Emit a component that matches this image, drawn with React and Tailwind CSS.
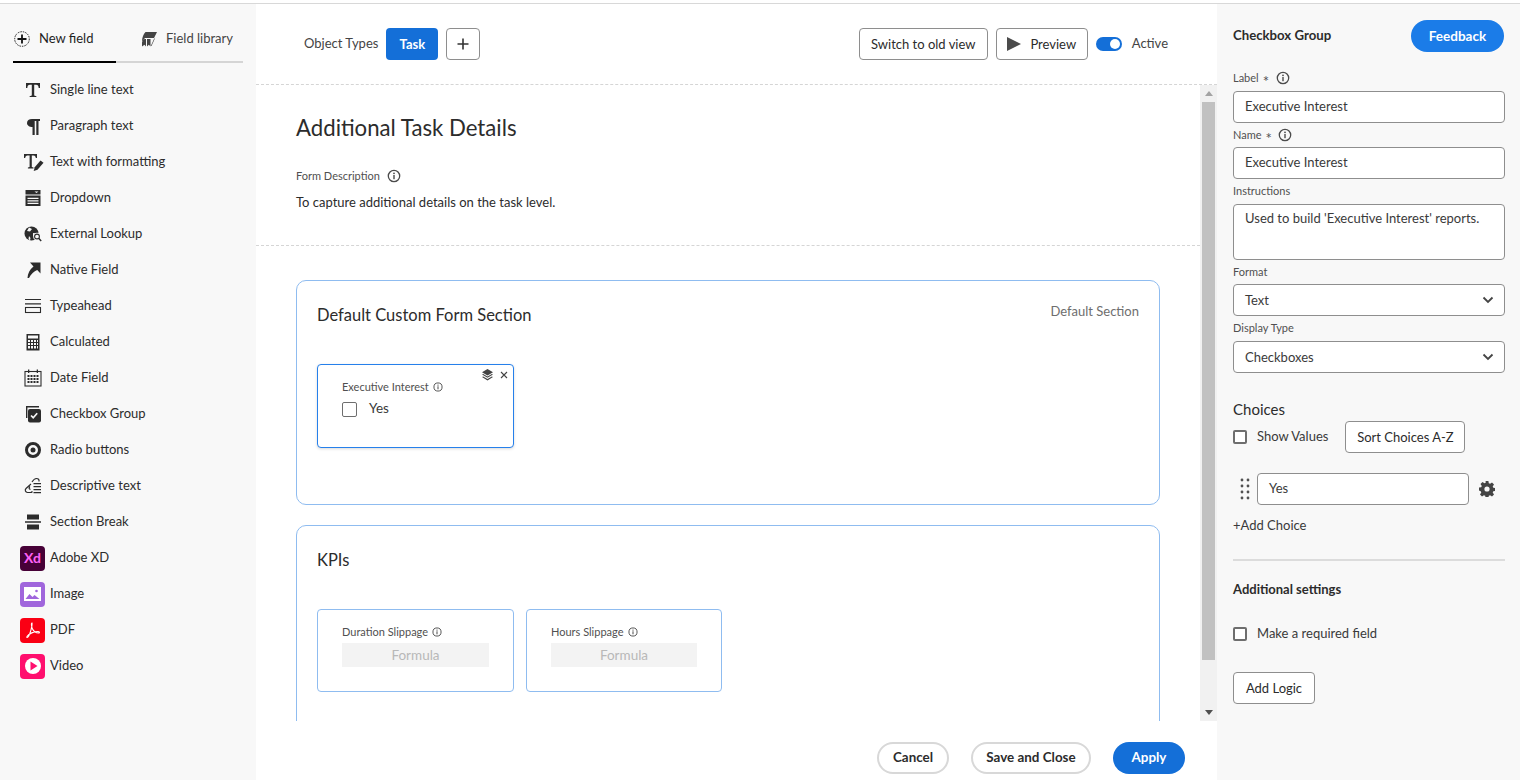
import React from "react";

const F = { fontFamily: '"Lato", "Noto Sans", sans-serif' };

const InfoIcon = ({ s = 14, c = "#4b4b4b" }) => (
  <svg width={s} height={s} viewBox="0 0 14 14" fill="none">
    <circle cx="7" cy="7" r="5.7" stroke={c} strokeWidth="1.3" />
    <circle cx="7" cy="4.300" r="0.9" fill={c} />
    <rect x="6.300" y="6" width="1.400" height="4.200" fill={c} />
  </svg>
);

const Ico = ({ children }) => (
  <svg width="18" height="18" viewBox="0 0 18 18" fill="#2c2c2c">{children}</svg>
);

const icons = {
  t: (
    <Ico>
      <path d="M2 2h14v5h-1.300c-.2-2-.8-3.200-2.700-3.200h-1.800V14.600l2.200.6V16H5.600v-.8l2.200-.6V3.800H6C4.100 3.800 3.500 5 3.300 7H2z" />
    </Ico>
  ),
  para: (
    <Ico>
      <path d="M8 2h8v2h-1.500v14h-2.200V4H10.700v14H8.500v-8C5.500 10 3 8.500 3 6s2-4 5-4z" />
    </Ico>
  ),
  fmt: (
    <svg width="20" height="18" viewBox="0 0 20 18" fill="#2c2c2c">
      <path d="M0 1h13v4h-1.200c-.2-1.600-.7-2.500-2.300-2.500H7.800V14l1.700.5v1H3.900v-1l1.700-.5V2.500H3.500C1.900 2.500 1.400 3.400 1.200 5H0z" />
      <path d="M16.500 7.500l3 2.200-6 7-3.800 1.200 1-3.700z" />
    </svg>
  ),
  dd: (
    <Ico>
      <path d="M1.500 1h15v4.500h-15zM1.500 6.500h15V17h-15z" />
      <path d="M10.500 2.500h4l-2 1.600z" fill="#f8f8f8" />
      <path d="M3.500 8.700h11v1.300h-11zM3.500 11.200h11v1.300h-11zM3.500 13.700h11V15h-11z" fill="#f8f8f8" />
    </Ico>
  ),
  globe: (
    <svg width="18" height="18" viewBox="0 0 18 18" fill="#2c2c2c">
      <circle cx="7.500" cy="8.500" r="7" />
      <path d="M5 2.500l3 1.500-2 2.500-3-.5zM9 8l3.500.5-2 3-1.500-.5zM5 11l1.500 2-.5 2.500-1.500-1.500z" fill="#f8f8f8" />
      <circle cx="13" cy="11.500" r="3.800" fill="#f8f8f8" />
      <circle cx="13" cy="11.500" r="2.400" fill="#f8f8f8" stroke="#2c2c2c" strokeWidth="1.100" />
      <path d="M14.700 13.200l2.500 2.800" stroke="#2c2c2c" strokeWidth="1.400" />
    </svg>
  ),
  arrow: (
    <Ico>
      <path d="M6 1.500h10.500v11L13.200 9C10 10.500 7 13 5 17H3.500c.3-4.500 2-8.500 6-11.500z" />
    </Ico>
  ),
  type: (
    <Ico>
      <path d="M1 2h16v1.100H1zM1 6.300h16v1.100H1z" />
      <rect x="1.500" y="10.500" width="15" height="5" fill="none" stroke="#2c2c2c" strokeWidth="1.100" />
    </Ico>
  ),
  calc: (
    <Ico>
      <path d="M2.500 1h13v16.500h-13z" />
      <path d="M4 2.500h10v3H4z" fill="#f8f8f8" />
      <path d="M4 7h2v2H4zM7 7h2v2H7zM10 7h2v2h-2zM13 7h1v2h-1zM4 10h2v2H4zM7 10h2v2H7zM10 10h2v2h-2zM13 10h1v2h-1zM4 13h2v2.500H4zM7 13h2v2.500H7zM10 13h2v2.500h-2zM13 13h1v2.500h-1z" fill="#f8f8f8" />
    </Ico>
  ),
  date: (
    <Ico>
      <rect x="1" y="2.500" width="16" height="14.500" fill="none" stroke="#2c2c2c" strokeWidth="1.100" />
      <path d="M4 .5h1.300v3.500H4zM12.700 .5H14v3.500h-1.300z" />
      <path d="M3.500 6h2v2h-2zM6.500 6h2v2h-2zM9.500 6h2v2h-2zM12.500 6h2v2h-2zM3.500 9h2v2h-2zM6.500 9h2v2h-2zM9.500 9h2v2h-2zM12.500 9h2v2h-2zM3.500 12h2v2h-2zM6.500 12h2v2h-2zM9.500 12h2v2h-2zM12.500 12h2v2h-2z" />
    </Ico>
  ),
  check: (
    <Ico>
      <path d="M2 1h13v1.400H3.400V13H2z" />
      <rect x="4" y="4" width="13" height="13.500" rx="2" />
      <path d="M7 10.500l2.200 2.200 4-4.400" fill="none" stroke="#f8f8f8" strokeWidth="1.700" />
    </Ico>
  ),
  radio: (
    <Ico>
      <circle cx="9" cy="9" r="6.500" fill="none" stroke="#2c2c2c" strokeWidth="3" />
      <circle cx="9" cy="9" r="2.500" />
    </Ico>
  ),
  desc: (
    <Ico>
      <path d="M7 7L2 11.500c-1.500 1.500-.5 4 1.500 4h3c1 0 1.500-.5 2-1M6 9.500c-1.500 1.200-1 2.800.5 2.800M8 5c1.200-2 2.700-3.500 4.500-3.500S15.300 2.500 15 4.500" fill="none" stroke="#2c2c2c" strokeWidth="1.200" />
      <path d="M9.500 6h7.500v1.200H9.500zM9.500 9H17v1.200H9.500zM9.500 12H17v1.200H9.500zM9.500 15H17v1.200H9.500z" />
    </Ico>
  ),
  sec: (
    <Ico>
      <path d="M3 1.500h12v5H3zM1 8.200h16v1.500H1zM3 11.500h12v5H3z" />
    </Ico>
  ),
};

const Badge = ({ bg, children }) => (
  <span className={`w-[25px] h-[25px] rounded-[4px] flex items-center justify-center shrink-0 ${bg}`}>{children}</span>
);

const items = [
  ["Single line text", icons.t],
  ["Paragraph text", icons.para],
  ["Text with formatting", icons.fmt],
  ["Dropdown", icons.dd],
  ["External Lookup", icons.globe],
  ["Native Field", icons.arrow],
  ["Typeahead", icons.type],
  ["Calculated", icons.calc],
  ["Date Field", icons.date],
  ["Checkbox Group", icons.check],
  ["Radio buttons", icons.radio],
  ["Descriptive text", icons.desc],
  ["Section Break", icons.sec],
];

const badges = [
  [
    "Adobe XD",
    <Badge bg="bg-[#470137]">
      <span className="text-[#ff61f6] text-[14px] font-bold leading-none">Xd</span>
    </Badge>,
  ],
  [
    "Image",
    <Badge bg="bg-[#a066dc]">
      <svg width="17" height="14" viewBox="0 0 17 14">
        <rect width="17" height="14" fill="#fff" />
        <path d="M1.500 12l4-5 3 3 2-2 5 4z" fill="#a066dc" />
        <circle cx="12.500" cy="4" r="1.300" fill="#a066dc" />
      </svg>
    </Badge>,
  ],
  [
    "PDF",
    <Badge bg="bg-[#fa0014]">
      <svg width="15" height="16" viewBox="0 0 15 16" fill="none" stroke="#fff" strokeWidth="1.100">
        <path d="M7 1c-1 0-.5 4 .5 6s3 4 6 4c1.500 0 1-1.500-.5-1.500-4 0-9 2-11 5-.8 1 .5 1.500 1.500 0C5 12 7.500 4 7 1z" />
      </svg>
    </Badge>,
  ],
  [
    "Video",
    <Badge bg="bg-[#ff0f6e]">
      <svg width="18" height="18" viewBox="0 0 18 18">
        <circle cx="9" cy="9" r="8" fill="#fff" />
        <path d="M6.500 4.500l7 4.500-7 4.500z" fill="#ff0f6e" />
      </svg>
    </Badge>,
  ],
];

const Sidebar = () => (
  <aside className="w-[256px] shrink-0 bg-[#f8f8f8] pt-[16px]">
    <div className="mx-[13px] w-[230px] h-[43px] flex border-b-2 border-[#d5d5d5]">
      <div className="w-[103px] h-[43px] border-b-2 border-black flex items-center gap-[9px] text-[13px] text-[#1f1f1f] pb-[4px] shrink-0">
        <svg width="16" height="16" viewBox="0 0 16 16" fill="none" className="ml-[1px]">
          <circle cx="8" cy="8" r="7.300" stroke="#222" strokeDasharray="1.500 1" />
          <path d="M8 3.500v9M3.500 8h9" stroke="#111" strokeWidth="1.800" />
        </svg>
        New field
      </div>
      <div className="flex items-center text-[13px] text-[#444] pb-[4px] pl-[25px] gap-[9px]">
        <svg width="16" height="16" viewBox="0 0 16 16" fill="#444">
          <path d="M4.500 1H16l-3 6H4L1 10.500C1 6.500 2.500 3 4.500 1z" />
          <path d="M1 11.500C1.500 9.500 2.500 8 4 8h1v7.500l-1.500-1.700L1 15.500z" />
          <path d="M6 8h3.500v7.500L7.800 13.700 6 15.500z" />
          <path d="M13 8l1.200-1.300-3.700 8.300H9.800z" />
        </svg>
        Field library
      </div>
    </div>
    <ul className="mt-[9px] text-[13px] text-[#2c2c2c]">
      {items.map(([label, icon]) => (
        <li key={label} className="h-[36px] flex items-center">
          <span className="w-[50px] pl-[24px] flex items-center shrink-0">{icon}</span>
          {label}
        </li>
      ))}
      {badges.map(([label, icon]) => (
        <li key={label} className="h-[36px] flex items-center">
          <span className="w-[50px] pl-[20px] flex items-center shrink-0">{icon}</span>
          {label}
        </li>
      ))}
    </ul>
  </aside>
);

const OutlineBtn = ({ className = "", children }) => (
  <button className={`h-[32px] bg-white border border-[#8e8e8e] rounded-[4px] text-[13px] text-[#2c2c2c] flex items-center justify-center pt-[1px] ${className}`}>
    {children}
  </button>
);

const FieldCard = ({ label, className = "", children, x }) => (
  <div className={`relative rounded-[4px] border bg-white pl-[24px] pt-[13px] ${className}`}>
    {x}
    <div className="flex items-center gap-[4px] text-[11px] leading-[18px] text-[#505050]">
      {label}
      <InfoIcon s={10} />
    </div>
    {children}
  </div>
);

const Formula = ({ w }) => (
  <div className={`h-[24px] bg-[#f3f3f3] text-[#b8b8b8] text-[13.500px] flex items-center justify-center ${w}`}>Formula</div>
);

const Section = ({ title, className = "", right, children }) => (
  <section className={`w-[864px] border border-[#8fbcf0] rounded-[10px] px-[20px] shrink-0 ${className}`}>
    <div className="h-[83px] pt-[20px] flex justify-between items-start">
      <h3 className="text-[16.500px] text-[#2c2c2c] leading-[28px]">{title}</h3>
      {right && <span className="text-[13px] text-[#6e6e6e] leading-[20px]">{right}</span>}
    </div>
    {children}
  </section>
);

const Center = () => (
  <main className="flex-1 min-w-0 bg-white flex flex-col">
    <div className="h-[81px] shrink-0 border-b border-dashed border-[#d5d5d5] flex items-center pl-[48px] pr-[49px]">
      <span className="text-[13px] text-[#444] mr-[8px]">Object Types</span>
      <button className="h-[32px] w-[52px] rounded-[4px] bg-[#146fd8] text-white text-[13px] font-bold mr-[8px] pt-[1px]">Task</button>
      <OutlineBtn className="w-[34px] !pt-0">
        <svg width="14" height="14" viewBox="0 0 14 14">
          <path d="M7 1.500v11M1.500 7h11" stroke="#333" strokeWidth="1.600" />
        </svg>
      </OutlineBtn>
      <div className="flex-1" />
      <OutlineBtn className="w-[129px] mr-[8px]">Switch to old view</OutlineBtn>
      <OutlineBtn className="w-[92px] mr-[8px] gap-[9px]">
        <svg width="14" height="14" viewBox="0 0 14 14" className="-translate-y-[1px]">
          <path d="M0 0l14 7-14 7z" fill="#4b4b4b" />
        </svg>
        Preview
      </OutlineBtn>
      <span className="relative w-[26px] h-[14px] rounded-full bg-[#146fd8] mr-[10px]">
        <span className="absolute right-[2px] top-[2px] w-[10px] h-[10px] rounded-full bg-white" />
      </span>
      <span className="text-[13px] text-[#444] pb-[1px]">Active</span>
    </div>
    <div className="flex-1 min-h-0 flex">
      <div className="flex-1 min-w-0 overflow-hidden">
        <div className="h-[161px] border-b border-dashed border-[#d5d5d5] pl-[40px] pt-[27px]">
          <h1 className="text-[22.200px] leading-[32px] text-[#2c2c2c]">Additional Task Details</h1>
          <div className="mt-[23px] flex items-center gap-[7px] text-[11px] leading-[18px] text-[#505050]">
            Form Description
            <InfoIcon s={14} />
          </div>
          <p className="mt-[8px] text-[13px] leading-[18px] text-[#2c2c2c]">To capture additional details on the task level.</p>
        </div>
        <div className="pl-[40px] pt-[34px] flex flex-col gap-[20px]">
          <Section title="Default Custom Form Section" right="Default Section" className="h-[225px]">
            <FieldCard
              label="Executive Interest"
              className="w-[197px] h-[84px] border-[#2680eb] shadow-[0_1px_3px_rgba(0,0,0,0.15)]"
              x={
                <div className="absolute right-[5px] top-[4px] flex items-center gap-[7px]">
                  <svg width="11" height="12" viewBox="0 0 11 12" fill="#444">
                    <path d="M5.500 0L11 3.200 5.500 6.400 0 3.200z" />
                    <path d="M0 5.500l1.200-.6 4.300 2.500 4.300-2.500 1.200.6-5.500 3.200zM0 8l1.200-.6 4.300 2.500L9.800 7.400 11 8l-5.500 3.500z" />
                  </svg>
                  <svg width="8" height="8" viewBox="0 0 8 8">
                    <path d="M1 1l6 6M7 1L1 7" stroke="#444" strokeWidth="1.100" />
                  </svg>
                </div>
              }
            >
              <div className="flex items-center mt-[4px]">
                <span className="w-[15px] h-[15px] rounded-[2px] border border-[#6e6e6e] bg-white" />
                <span className="ml-[12px] text-[13.500px] text-[#3a3a3a] leading-[18px] -translate-y-[1px]">Yes</span>
              </div>
            </FieldCard>
          </Section>
          <Section title="KPIs" className="h-[300px]">
            <div className="flex gap-[12px]">
              <FieldCard label="Duration Slippage" className="w-[197px] h-[83px] border-[#8fbcf0]">
                <div className="pt-[2px]"><Formula w="w-[147px]" /></div>
              </FieldCard>
              <FieldCard label="Hours Slippage" className="w-[196px] h-[83px] border-[#8fbcf0]">
                <div className="pt-[2px]"><Formula w="w-[146px]" /></div>
              </FieldCard>
            </div>
          </Section>
        </div>
      </div>
      <div className="w-[17px] shrink-0 bg-[#f1f1f1] flex flex-col items-center">
        <div className="h-[17px] flex items-center justify-center">
          <svg width="8" height="5" viewBox="0 0 8 5"><path d="M4 0l4 5H0z" fill="#a3a3a3" /></svg>
        </div>
        <div className="w-[13px] h-[558px] bg-[#c1c1c1]" />
        <div className="flex-1" />
        <div className="h-[17px] flex items-center justify-center">
          <svg width="8" height="5" viewBox="0 0 8 5"><path d="M0 0h8L4 5z" fill="#505050" /></svg>
        </div>
      </div>
    </div>
    <div className="h-[59px] shrink-0 flex items-start justify-end gap-[22px] pr-[32px] pt-[21px] text-[13.400px] font-bold">
      <button className="w-[72px] h-[32px] rounded-full bg-white border-2 border-[#d8d8d8] text-[#2c2c2c] pb-[1px]">Cancel</button>
      <button className="w-[120px] h-[32px] rounded-full bg-white border-2 border-[#d8d8d8] text-[#2c2c2c] pb-[1px]">Save and Close</button>
      <button className="w-[72px] h-[32px] rounded-full bg-[#146fd8] text-white pb-[1px]">Apply</button>
    </div>
  </main>
);

const Lbl = ({ children, info, h = "h-[24px]", gap = "gap-[6px]", extra = "" }) => (
  <div className={`${h} flex items-center ${gap} text-[11px] text-[#505050] ${extra}`}>
    {children}
    {info && <InfoIcon s={14} />}
  </div>
);

const Star = () => <span className="ml-[4px] text-[15px] leading-none translate-y-[3px]">*</span>;

const Inp = ({ children, className = "" }) => (
  <div className={`w-[272px] bg-white border border-[#8e8e8e] rounded-[4px] pl-[11px] text-[13px] text-[#3a3a3a] flex ${className}`}>
    {children}
  </div>
);

const Sel = ({ children }) => (
  <Inp className="h-[32px] items-center justify-between pr-[10px] pt-[1px]">
    {children}
    <svg width="12" height="8" viewBox="0 0 12 8" fill="none" className="-translate-y-[1px]">
      <path d="M1.500 1.500L6 6l4.500-4.500" stroke="#444" strokeWidth="1.800" />
    </svg>
  </Inp>
);

const Cb = () => <span className="w-[14px] h-[14px] rounded-[2px] border-2 border-[#6e6e6e] bg-white shrink-0" />;

const Right = () => (
  <aside className="flex-1 min-w-0 bg-[#f8f8f8] pl-[16px] pt-[16px]">
    <div className="w-[271px] flex items-center justify-between h-[32px]">
      <h2 className="text-[13.200px] font-bold text-[#2c2c2c]">Checkbox Group</h2>
      <button className="w-[93px] h-[32px] rounded-full bg-[#1b7ce8] text-white text-[13.500px] font-bold">Feedback</button>
    </div>
    <div className="pt-[15px]">
      <Lbl info gap="gap-[7px]" extra="pb-[2px]"><span className="flex items-center">Label<Star /></span></Lbl>
      <Inp className="h-[32px] items-center pb-[1px]">Executive Interest</Inp>
      <Lbl info><span className="flex items-center">Name<Star /></span></Lbl>
      <Inp className="h-[32px] items-center pb-[1px]">Executive Interest</Inp>
      <Lbl h="h-[25px]">Instructions</Lbl>
      <Inp className="h-[56px] items-start pt-[4px]">Used to build 'Executive Interest' reports.</Inp>
      <Lbl>Format</Lbl>
      <Sel>Text</Sel>
      <Lbl h="h-[25px]">Display Type</Lbl>
      <Sel>Checkboxes</Sel>
    </div>
    <h3 className="mt-[25px] h-[22px] text-[15px] leading-[22px] text-[#2c2c2c]">Choices</h3>
    <div className="mt-[1px] flex items-center h-[32px] text-[13px] text-[#3a3a3a]">
      <Cb />
      <span className="ml-[10px] mr-[17px]">Show Values</span>
      <OutlineBtn className="w-[120px]">Sort Choices A-Z</OutlineBtn>
    </div>
    <div className="mt-[20px] h-[32px] flex items-center">
      <svg width="10" height="22" viewBox="0 0 10 22" fill="#505050" className="ml-[7px] mr-[7px]">
        <circle cx="2" cy="2" r="1.400" /><circle cx="8" cy="2" r="1.400" />
        <circle cx="2" cy="8" r="1.400" /><circle cx="8" cy="8" r="1.400" />
        <circle cx="2" cy="14" r="1.400" /><circle cx="8" cy="14" r="1.400" />
        <circle cx="2" cy="20" r="1.400" /><circle cx="8" cy="20" r="1.400" />
      </svg>
      <Inp className="!w-[212px] h-[32px] items-center">Yes</Inp>
      <svg width="16" height="16" viewBox="0 0 16 16" fill="#444" className="ml-[10px]">
        <path fillRule="evenodd" d="M6.600 0h2.800l.4 2.200 1.300.6 1.900-1.300 2 2-1.300 1.900.6 1.300 2.200.4v2.800l-2.200.4-.6 1.300 1.300 1.900-2 2-1.900-1.300-1.300.6-.4 2.200H6.600l-.4-2.200-1.300-.6-1.900 1.300-2-2 1.300-1.900-.6-1.300L0 9.400V6.600l2.200-.4.6-1.300-1.300-1.900 2-2 1.900 1.300 1.300-.6zM8 5.400a2.600 2.600 0 100 5.200 2.600 2.600 0 000-5.200z" />
      </svg>
    </div>
    <div className="mt-[10px] h-[20px] leading-[20px] text-[13px] text-[#3a3a3a]">+Add Choice</div>
    <div className="mt-[24px] w-[272px] border-t-2 border-[#dcdcdc]" />
    <h3 className="mt-[18px] h-[20px] leading-[20px] text-[13px] font-bold text-[#2c2c2c]">Additional settings</h3>
    <div className="mt-[25px] h-[20px] flex items-center text-[13px] text-[#3a3a3a]">
      <Cb />
      <span className="ml-[10px]">Make a required field</span>
    </div>
    <OutlineBtn className="mt-[28px] w-[82px]">Add Logic</OutlineBtn>
  </aside>
);

export default function App() {
  return (
    <div className="w-[1520px] h-[780px] overflow-hidden bg-white flex flex-col" style={F}>
      <div className="h-[4px] shrink-0 border-b border-[#d8d8d8]" />
      <div className="flex-1 min-h-0 flex">
        <Sidebar />
        <div className="w-[961px] shrink-0 flex"><Center /></div>
        <Right />
      </div>
    </div>
  );
}
